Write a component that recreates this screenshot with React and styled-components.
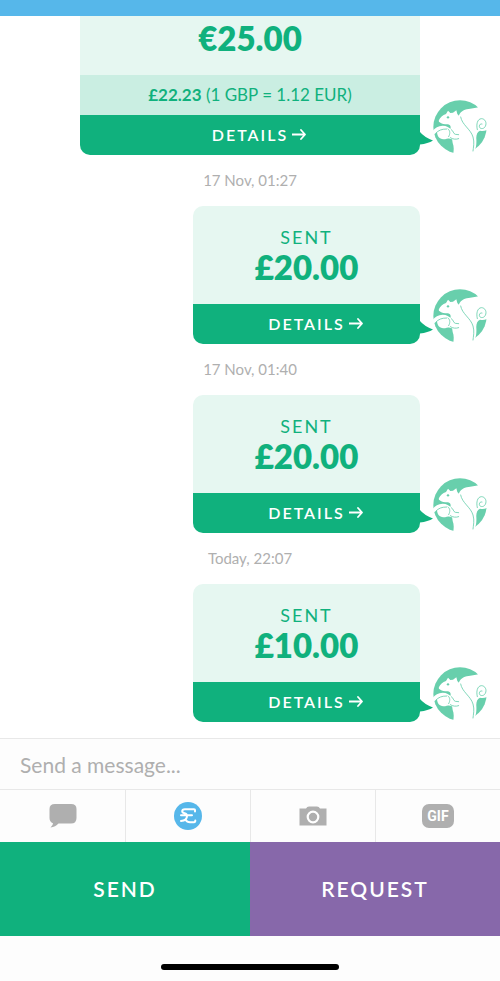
import React, { useState } from 'react';
import styled, { createGlobalStyle } from 'styled-components';

const messages = [
    { id: 1, amount: '€25.00', rate: { converted: '£22.23', text: '(1 GBP = 1.12 EUR)' } },
    { id: 2, date: '17 Nov, 01:27', label: 'SENT', amount: '£20.00' },
    { id: 3, date: '17 Nov, 01:40', label: 'SENT', amount: '£20.00' },
    { id: 4, date: 'Today, 22:07', label: 'SENT', amount: '£10.00' },
];

const Squirrel = () => (
    <svg width="54" height="54" viewBox="9 9 162 162" aria-hidden="true">
        <circle cx="90" cy="90" r="80" fill="#68cfac" />
        {/* tail */}
        <path
            d="M86 60C88 46 100 38 116 36C128 34 140 34 150 28L176 60V98C166 100 160 104 150 101C142 104 138 114 139 126C140 142 138 152 134 162L120 176H90Z"
            fill="#fff"
        />
        {/* head and body */}
        <path
            d="M27 69C30 62 38 54 48 51L54 41L61 48L69 47L79 40L82 51C92 60 98 72 106 82C118 96 130 106 131 130C132 146 128 160 124 174H69C72 158 72 148 68 138L64 112L60 98C64 90 62 84 54 82C44 82 34 81 29 76C26 74 26 72 27 69Z"
            fill="#fff"
        />
        {/* acorn and paws */}
        <path
            d="M2 112C8 98 18 88 38 86C50 86 58 92 64 98L74 104L72 128L62 126C58 122 52 126 40 127C28 126 22 118 21 106L6 116Z"
            fill="#fff"
        />
        <g fill="none" stroke="#68cfac" strokeWidth="2.5" strokeLinecap="round">
            <path d="M18 108C26 100 34 96 50 96" />
            <path d="M54 96C61 101 61 110 56 119" />
            <path d="M64 98C71 101 69 110 76 112L86 113" />
            <path d="M61 122C68 127 78 128 86 125" />
            <path d="M92 60C96 84 122 96 129 120C134 136 130 152 129 162" />
            <path d="M142 98C138 82 142 66 154 65C166 65 171 78 166 88C161 98 148 96 148 88C148 82 152 80 156 81" />
        </g>
        <circle cx="54" cy="61" r="3.5" fill="#68cfac" />
    </svg>
);

const Arrow = () => (
    <svg width="14" height="12" viewBox="0 0 14 12" fill="none" stroke="currentColor" strokeWidth="1.8" aria-hidden="true">
        <path d="M0 6.500H13M9 2L13 6.500L9 11" strokeLinejoin="round" strokeLinecap="round" />
    </svg>
);

const ChatIcon = () => (
    <svg width="28" height="26" viewBox="0 0 28 26" fill="#afafaf" aria-hidden="true">
        <path d="M6 1H22Q27.500 1 27.500 6V15Q27.500 20.500 22 20.500H9.500Q6.500 24 1.500 24.500Q4 22.500 4 20.200Q.500 19 .500 15V6Q.500 1 6 1Z" />
    </svg>
);

const PoundIcon = () => (
    <svg width="28" height="28" viewBox="0 0 28 28" aria-hidden="true">
        <circle cx="14" cy="14" r="14" fill="#56b7ea" />
        <path
            d="M21 9.500V8Q21 7.300 20 7.300H11Q8.200 7.300 8.200 9.300Q8.200 10.800 10.500 11.300Q13 12 13 14Q13 18.500 7 19M7 13.300H18M11.500 17.500Q13 20.200 16 20.200H20Q21.300 20.200 21.300 18.500"
            fill="none"
            stroke="#fff"
            strokeWidth="2"
            strokeLinecap="round"
            strokeLinejoin="round"
        />
    </svg>
);

const CameraIcon = () => (
    <svg width="28" height="20" viewBox="0 0 28 20" aria-hidden="true">
        <path d="M.500 2.500H7Q8 .500 10 .500H18Q20 .500 21 2.500H27.500V19.500H.500V2.500Z" fill="#afafaf" />
        <circle cx="14" cy="11" r="5.300" fill="none" stroke="#fff" strokeWidth="2.200" />
    </svg>
);

const App = () => {
    const [message, setMessage] = useState('');

    return (
        <Screen>
            <GlobalStyle />
            <Header />
            <Thread>
                {messages.map((item) => (
                    <React.Fragment key={item.id}>
                        {item.date && <Timestamp>{item.date}</Timestamp>}
                        <Row>
                            <Card $wide={Boolean(item.rate)}>
                                <Summary>
                                    {item.label && <Label>{item.label}</Label>}
                                    <Amount>{item.amount}</Amount>
                                </Summary>
                                {item.rate && (
                                    <Rate>
                                        <strong>{item.rate.converted}</strong> {item.rate.text}
                                    </Rate>
                                )}
                                <Details type="button">
                                    DETAILS <Arrow />
                                </Details>
                                <Pointer width="13" height="13" viewBox="0 0 13 13" aria-hidden="true">
                                    <path d="M0 0Q4 5 13 8.500Q8 11.500 0 12.500Z" fill="#10b17d" />
                                </Pointer>
                            </Card>
                            <Avatar>
                                <Squirrel />
                            </Avatar>
                        </Row>
                    </React.Fragment>
                ))}
            </Thread>
            <Composer>
                <MessageInput
                    type="text"
                    aria-label="Message"
                    value={message}
                    onChange={(e) => setMessage(e.target.value)}
                    placeholder="Send a message..."
                />
            </Composer>
            <Tools>
                <Tool type="button" aria-label="Text"><ChatIcon /></Tool>
                <Tool type="button" aria-label="Payment"><PoundIcon /></Tool>
                <Tool type="button" aria-label="Camera"><CameraIcon /></Tool>
                <Tool type="button"><GifBadge>GIF</GifBadge></Tool>
            </Tools>
            <Actions>
                <Action type="button" $color="#10b17d">SEND</Action>
                <Action type="button" $color="#8768aa">REQUEST</Action>
            </Actions>
            <Footer>
                <HomeBar />
            </Footer>
        </Screen>
    );
};

// Styled components
const GlobalStyle = createGlobalStyle`
  * {
    box-sizing: border-box;
  }

  body {
    margin: 0;
    background: #fff;
    font-family: Lato, "Open Sans", sans-serif;
  }

  button, input {
    font-family: inherit;
  }

  svg {
    display: block;
  }
`;

const Screen = styled.div`
  display: flex;
  flex-direction: column;
  height: 100vh;
`;

const Header = styled.header`
  flex: none;
  height: 16px;
  background: #56b7ea;
`;

const Thread = styled.main`
  flex: 1;
  min-height: 0;
  display: flex;
  flex-direction: column;
  justify-content: flex-end;
  overflow: hidden;
  padding-bottom: 16px;
`;

const Timestamp = styled.time`
  flex: none;
  text-align: center;
  font-size: 15px;
  line-height: 51px;
  color: #afafaf;
`;

const Row = styled.div`
  flex: none;
  display: flex;
  justify-content: flex-end;
  align-items: flex-end;
  padding-left: 80px;
`;

const Card = styled.article`
  position: relative;
  flex: 0 1 ${(props) => (props.$wide ? '340px' : '227px')};
  text-align: center;
  color: #10b17d;
`;

const Summary = styled.div`
  display: flex;
  flex-direction: column;
  justify-content: flex-end;
  height: 98px;
  padding-bottom: 17px;
  border-radius: 10px 10px 0 0;
  background: #e6f7f1;
`;

const Label = styled.div`
  font-size: 18px;
  line-height: 20px;
  letter-spacing: 2px;
`;

const Amount = styled.div`
  font-size: 33px;
  font-weight: 800;
  line-height: 40px;
`;

const Rate = styled.div`
  font-size: 17px;
  line-height: 40px;
  background: #caeee2;
`;

const Details = styled.button`
  display: flex;
  align-items: center;
  justify-content: center;
  gap: 4px;
  width: 100%;
  height: 40px;
  padding: 0 0 2px 18px;
  border: none;
  border-radius: 0 0 10px 10px;
  background: #10b17d;
  color: #fff;
  font-size: 16px;
  font-weight: 600;
  letter-spacing: 2px;
  cursor: pointer;
`;

const Pointer = styled.svg`
  position: absolute;
  left: 100%;
  bottom: 10px;
`;

const Avatar = styled.div`
  flex: none;
  width: 80px;
  padding: 0 13px 1px;
`;

const Composer = styled.div`
  flex: none;
  border-top: 1px solid #e8e8e8;
`;

const MessageInput = styled.input`
  display: block;
  width: 100%;
  height: 50px;
  padding: 0 20px;
  border: none;
  background: #fdfdfd;
  color: #333;
  font-size: 21px;

  &::placeholder {
    color: #afafaf;
    opacity: 1;
  }
`;

const Tools = styled.div`
  flex: none;
  display: grid;
  grid-template-columns: repeat(4, 1fr);
  border-top: 1px solid #e8e8e8;
`;

const Tool = styled.button`
  display: flex;
  align-items: center;
  justify-content: center;
  height: 52px;
  padding: 0;
  border: none;
  background: #fdfdfd;
  cursor: pointer;

  & + & {
    border-left: 1px solid #e8e8e8;
  }
`;

const GifBadge = styled.span`
  width: 32px;
  border-radius: 7px;
  background: #afafaf;
  color: #fff;
  font-family: Roboto, sans-serif;
  font-size: 14px;
  font-weight: 700;
  line-height: 24px;
`;

const Actions = styled.div`
  flex: none;
  display: grid;
  grid-template-columns: 1fr 1fr;
`;

const Action = styled.button`
  height: 94px;
  padding: 0 0 2px;
  border: none;
  background: ${(props) => props.$color};
  color: #fff;
  font-size: 21px;
  font-weight: 600;
  letter-spacing: 2px;
  cursor: pointer;
`;

const Footer = styled.footer`
  flex: none;
  display: flex;
  justify-content: center;
  height: 45px;
  padding-top: 28px;
  background: #fdfdfd;
`;

const HomeBar = styled.div`
  width: 178px;
  height: 6px;
  border-radius: 3px;
  background: #000;
`;

export default App;
